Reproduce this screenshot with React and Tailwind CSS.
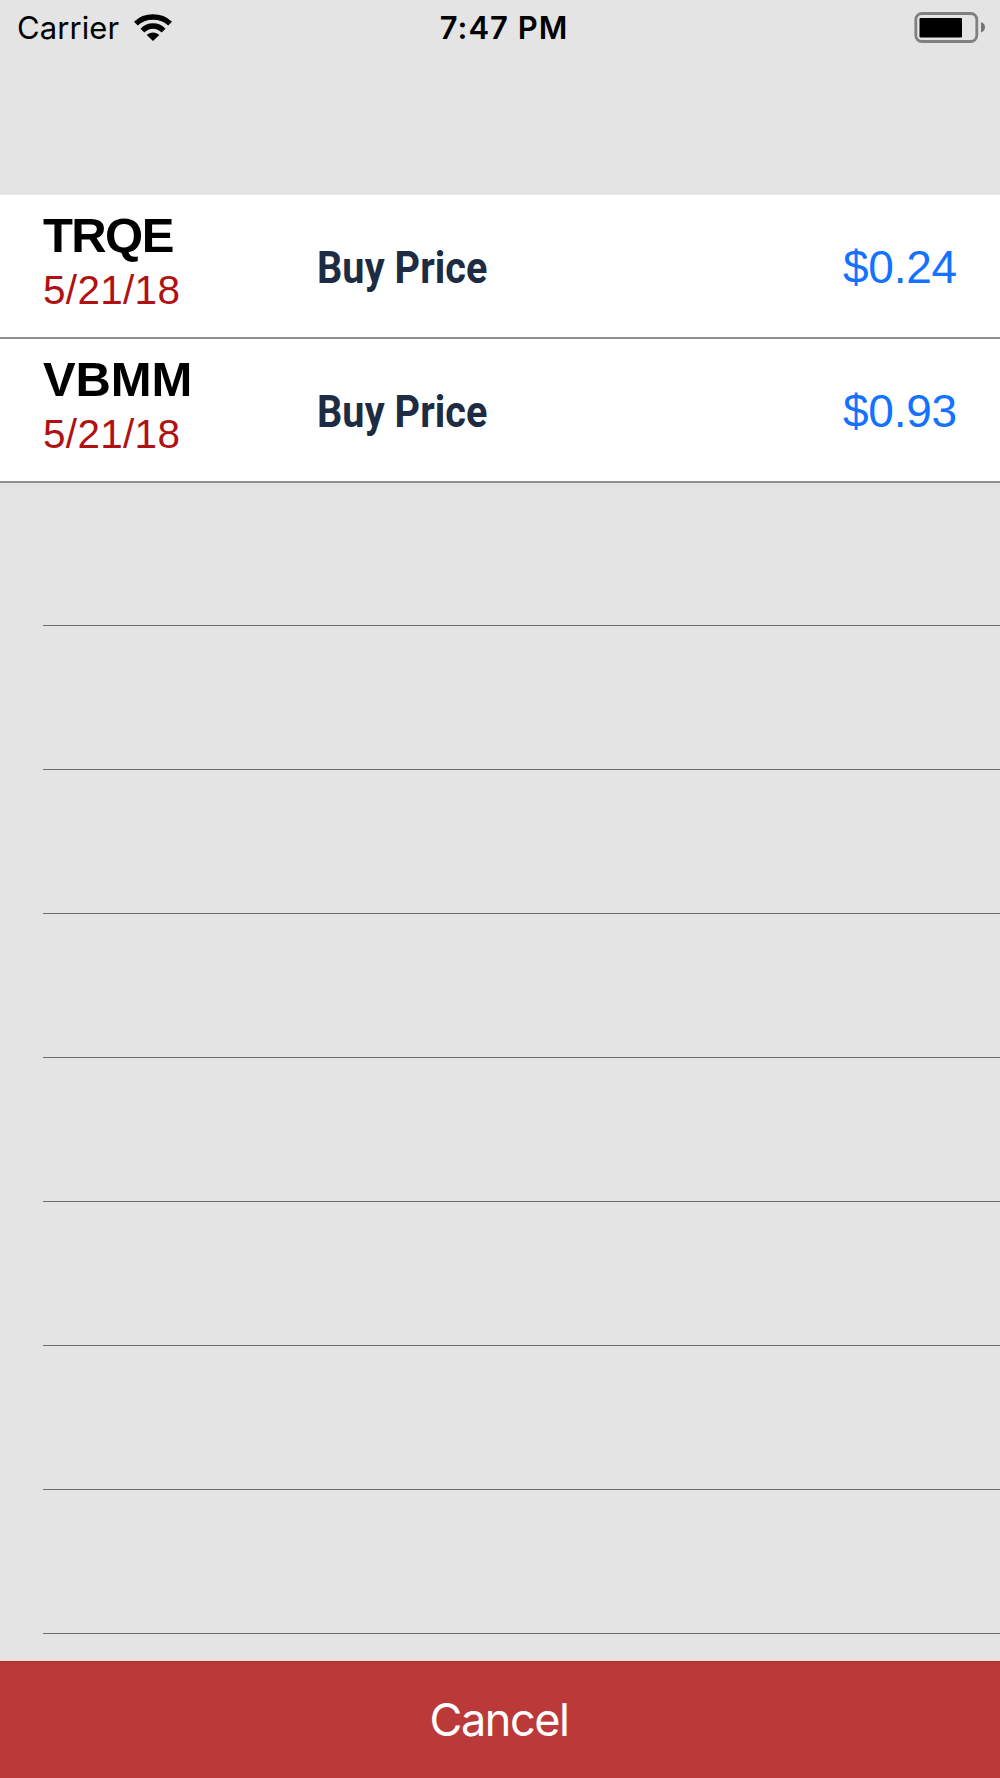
import React from 'react';

const trades = [
  { symbol: 'TRQE', date: '5/21/18', label: 'Buy Price', price: '$0.24', spacing: 'tracking-[-1.6px]' },
  { symbol: 'VBMM', date: '5/21/18', label: 'Buy Price', price: '$0.93', spacing: 'tracking-[-0.1px]' },
];

const emptyRows = [0, 1, 2, 3, 4, 5, 6, 7];

function StatusBar() {
  return (
    <header className="h-[54px] grid grid-cols-3 items-center pl-4 pr-[15px] text-black font-['Inter',sans-serif]">
      <div className="flex items-center">
        <span className="w-[118px] pl-px text-[31px] leading-[54px] pt-px tracking-[0.1px]">Carrier</span>
        <svg width="38" height="27" viewBox="0 0 38 27" fill="none" stroke="currentColor" strokeWidth="5.4">
          <path d="M1.9 9.6 C11 0.7 27 0.7 36.1 9.6" />
          <path d="M8.4 16.6 C14.5 10.4 23.5 10.4 29.6 16.6" />
          <path d="M12.7 21 C16 17.5 22 17.5 25.3 21 L19 27 Z" fill="currentColor" stroke="none" />
        </svg>
      </div>
      <span className="pl-[7px] pt-px text-center text-[31px] leading-[54px] font-semibold tracking-[1px] whitespace-nowrap">7:47 PM</span>
      <svg className="justify-self-end" width="71" height="32" viewBox="0 0 71 32">
        <rect x="1.8" y="1.5" width="61" height="28" rx="6" fill="none" stroke="#808080" strokeWidth="2.8" />
        <rect x="5.5" y="6" width="42.5" height="19.5" rx="1" fill="#000" />
        <path d="M67 10 Q71 11.5 71 15.3 Q71 19 67 20.5 Z" fill="#747474" />
      </svg>
    </header>
  );
}

function TradeRow({ trade }) {
  return (
    <div className="h-36 bg-white flex flex-col">
      <div className="flex-1 flex items-center px-[43px] font-['Liberation_Sans',Arial,sans-serif]">
        <div className="w-[274px] pb-[7px]">
          <div className={`text-[49px] leading-[54px] font-bold text-black ${trade.spacing}`}>{trade.symbol}</div>
          <div className="pt-px text-[40.5px] leading-[54px] tracking-[0.3px] text-[#b01214]">{trade.date}</div>
        </div>
        <div className="flex-1 pt-[3px]">
          <span className="inline-block origin-left scale-x-[0.89] text-[44.5px] leading-[54px] tracking-[0.1px] font-bold text-[#1d2b43] font-['Roboto',sans-serif] whitespace-nowrap">
            {trade.label}
          </span>
        </div>
        <div className="pt-px text-[46px] leading-[54px] tracking-[-0.2px] text-[#1372ff]">{trade.price}</div>
      </div>
      <div className="h-0.5 bg-[#8e8e8e]" />
    </div>
  );
}

export default function App() {
  return (
    <div className="w-[1000px] h-[1778px] flex flex-col bg-[#e4e4e4] overflow-hidden">
      <StatusBar />
      <main className="flex-1 pt-[141px]">
        {trades.map((trade) => (
          <TradeRow key={trade.symbol} trade={trade} />
        ))}
        {/* Empty table cells */}
        <div className="-mt-px">
          {emptyRows.map((row) => (
            <div key={row} className="h-36 ml-[43px] border-b border-[#6c6c6c]" />
          ))}
        </div>
      </main>
      <button className="h-[117px] shrink-0 bg-[#bb3a39] border-t border-[#b82628] pr-[2px] text-white text-[45px] tracking-[-1.4px] font-['Inter',sans-serif]">
        Cancel
      </button>
    </div>
  );
}
